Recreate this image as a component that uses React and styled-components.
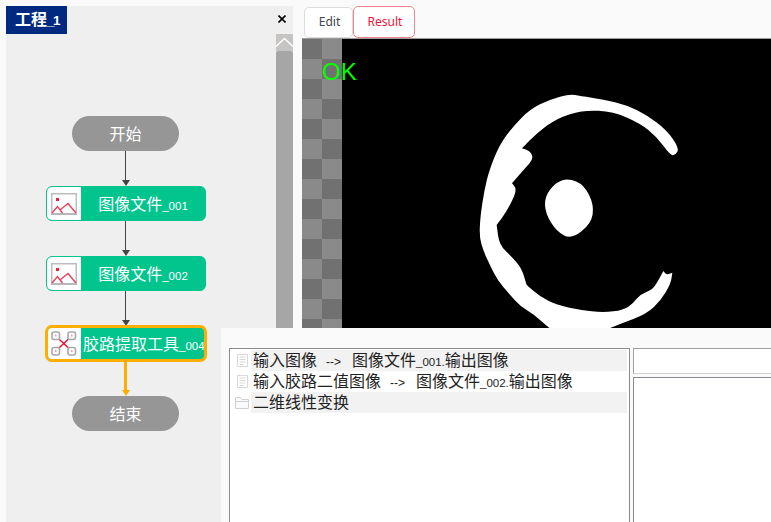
import React from "react";
import styled, { createGlobalStyle } from "styled-components";

const sans = `"Liberation Sans", "Noto Sans CJK SC", sans-serif`;

const Global = createGlobalStyle`
    html, body {
        margin: 0;
        padding: 0;
        overflow: hidden;
        background: #fafafa;
    }
    * { box-sizing: border-box; }
`;

const Page = styled.div`
    position: relative;
    display: flex;
    width: 771px;
    height: 522px;
    overflow: hidden;
    padding: 6px 0 0 6px;
    background: #fafafa;
    font-family: ${sans};
`;

const Project = styled.section`
    display: flex;
    flex-direction: column;
    flex: none;
    width: 287px;
    height: 516px;
    background: #efefef;
`;

const ProjectHead = styled.header`
    display: flex;
    flex: none;
    align-items: center;
    justify-content: space-between;
    height: 28px;
`;

const ProjectTab = styled.div`
    width: 61px;
    height: 28px;
    padding-left: 9px;
    background: #002a7f;
    color: #fff;
    font-size: 16px;
    font-weight: 700;
    line-height: 27px;
`;

const TabSuffix = styled.span`
    font-size: 13.5px;
    letter-spacing: -1.5px;
`;

const Close = styled.button`
    display: flex;
    width: 8px;
    height: 8px;
    margin: 0 7px 2px 0;
    padding: 0;
    border: 0;
    background: none;
`;

const ProjectBody = styled.div`
    display: flex;
    flex: 1;
    min-height: 0;
`;

const Canvas = styled.div`
    display: flex;
    flex-direction: column;
    align-items: center;
    flex: none;
    width: 240px;
    padding-top: 82px;
`;

const Scrollbar = styled.div`
    display: flex;
    flex-direction: column;
    width: 17px;
    margin-left: auto;
`;

const ScrollUp = styled.div`
    display: flex;
    flex: none;
    height: 17px;
    background: #c6c3c3;
`;

const ScrollThumb = styled.div`
    flex: 1;
    border-radius: 2px 2px 0 0;
    background: #a6a6a6;
`;

const Pill = styled.div`
    flex: none;
    width: 107px;
    height: 35px;
    margin-right: 1px;
    border-radius: 18px;
    background: #969696;
    color: #fff;
    font-size: 16px;
    line-height: 37px;
    text-align: center;
`;

const Connector = styled.div`
    display: flex;
    flex-direction: column;
    align-items: center;
    flex: none;
    height: 35px;
    margin-right: 1px;
    &::before {
        content: "";
        flex: 1;
        width: ${(props) => (props.$active ? "3px" : "1px")};
        background: ${(props) => (props.$active ? "#ffae00" : "#444")};
    }
    &::after {
        content: "";
        flex: none;
        border-style: solid;
        border-width: 6px 4px 0;
        border-color: ${(props) => (props.$active ? "#ffae00" : "#444")} transparent transparent;
    }
`;

const Node = styled.div`
    display: flex;
    flex: none;
    width: 160px;
    height: 35px;
    overflow: hidden;
    border: ${(props) => (props.$active ? "2px solid #ffae00" : "1px solid #02c58e")};
    border-radius: 6px;
    box-shadow: ${(props) => (props.$active ? "0 0 0 1px #ffae00" : "none")};
    background: #02c58e;
`;

const NodeIcon = styled.div`
    display: flex;
    align-items: center;
    flex: none;
    width: ${(props) => (props.$active ? "33px" : "34px")};
    padding-left: ${(props) => (props.$active ? "3px" : "4px")};
    background: #fff;
`;

const NodeLabel = styled.div`
    flex: 1;
    min-width: 0;
    padding-left: ${(props) => (props.$active ? "2px" : "0")};
    color: #fff;
    font-size: 16px;
    line-height: ${(props) => (props.$active ? "33px" : "35px")};
    text-align: ${(props) => (props.$active ? "left" : "center")};
    white-space: nowrap;
`;

const Small = styled.span`
    font-size: 11.5px;
`;

const Work = styled.section`
    display: flex;
    flex-direction: column;
    flex: none;
    width: 469px;
    margin: -6px 0 0 9px;
`;

const Tabs = styled.nav`
    display: flex;
    align-items: flex-end;
    flex: none;
    height: 38px;
    padding-left: 2px;
`;

const Tab = styled.button`
    width: ${(props) => (props.$active ? "62px" : "49px")};
    height: ${(props) => (props.$active ? "32px" : "31px")};
    padding: 0 0 2px 2px;
    border: 1px solid ${(props) => (props.$active ? "#f08492" : "#dcdcdc")};
    border-radius: 5px;
    background: #fff;
    color: ${(props) => (props.$active ? "#f0143c" : "#3f4650")};
    font-family: "Noto Sans", sans-serif;
    font-size: 12px;
`;

const Viewer = styled.div`
    position: relative;
    display: flex;
    flex: none;
    height: 484px;
    border-top: 1px solid #9c9c9c;
`;

const Checker = styled.div`
    flex: none;
    width: 40px;
    background-color: #8a8a8a;
    background-image: repeating-conic-gradient(#8a8a8a 0 25%, #717171 0 50%);
    background-size: 40px 40px;
`;

const Picture = styled.div`
    flex: 1;
    padding: 41px 0 0 128px;
    background: #000;
`;

const Verdict = styled.span`
    position: absolute;
    top: 19px;
    left: 20px;
    color: #00ff00;
    font-family: "Liberation Sans", sans-serif;
    font-size: 24px;
    line-height: 28px;
`;

const Props = styled.section`
    position: absolute;
    top: 328px;
    left: 221px;
    display: grid;
    grid-template-columns: 401px 160px;
    column-gap: 3px;
    width: 580px;
    height: 230px;
    padding: 20px 0 0 8px;
    background: #fafafa;
`;

const Tree = styled.div`
    height: 200px;
    padding-top: 1px;
    border: 1px solid #8a8a90;
    background: #fff;
`;

const Row = styled.div`
    display: flex;
    height: 21px;
`;

const RowIcon = styled.div`
    display: flex;
    align-items: center;
    justify-content: center;
    flex: none;
    width: 21px;
    padding-left: 3px;
`;

const RowLabel = styled.div`
    flex: 1;
    margin-right: 2px;
    padding-left: 2px;
    background: ${(props) => (props.$shaded ? "#f2f2f2" : "transparent")};
    color: #222;
    font-size: 16px;
    line-height: 21px;
    white-space: nowrap;
`;

const Arrow = styled.span`
    margin: 0 11px 0 9px;
    font-size: 12px;
`;

const Side = styled.div`
    display: flex;
    flex-direction: column;
    gap: 3px;
`;

const Field = styled.div`
    flex: none;
    height: 26px;
    border: 1px solid #a0a0a0;
    border-bottom-color: #d0d0d0;
    background: #fff;
`;

const SideBox = styled.div`
    flex: 1;
    border: 1px solid #8a8a90;
    background: #fff;
`;

const ImageIcon = () => (
    <svg width="26" height="22" viewBox="0 0 26 22" fill="none">
        <path d="M0.75 20.5V0.75H25.25V20.5" stroke="#bdbdbd" strokeWidth="1.5" />
        <rect x="0" y="20" width="26" height="2" fill="#b8b8b8" />
        <rect x="5" y="5" width="3" height="3" fill="#f0203c" />
        <path d="M1 20 6.5 13.5 11.5 20M9 17 17 10.5 25 20" stroke="#e8405a" strokeWidth="1.4" />
    </svg>
);

const ToolIcon = () => (
    <svg width="26" height="25" viewBox="0 0 26 25" fill="none">
        <g stroke="#a8a8a8" strokeWidth="1.6" fill="#fff">
            <rect x="1" y="1" width="7.5" height="7.5" rx="2" />
            <rect x="17" y="1" width="7.5" height="7.5" rx="2" />
            <rect x="1" y="16.5" width="7.5" height="7.5" rx="2" />
            <rect x="17" y="16.5" width="7.5" height="7.5" rx="2" />
        </g>
        <g fill="#f29aa6">
            <rect x="4" y="3.5" width="1.5" height="2" />
            <rect x="20" y="3.5" width="1.5" height="2" />
            <rect x="4" y="19" width="1.5" height="2" />
            <rect x="20" y="19" width="1.5" height="2" />
        </g>
        <path d="M8.5 8.5 17 16.5M17 8.5 8.5 16.5" stroke="#e8142e" strokeWidth="1.5" />
    </svg>
);

const DocIcon = () => (
    <svg width="11" height="13" viewBox="0 0 11 13" fill="none" stroke="#d8d8d8">
        <path d="M0.5 0.5h10v12h-10zM2.5 3h6M2.5 5.5h6M2.5 8h6M2.5 10.5h4" />
    </svg>
);

const FolderIcon = () => (
    <svg width="14" height="12" viewBox="0 0 14 12" fill="#fafafa" stroke="#cfcfcf">
        <path d="M0.5 11.5v-11h5l1.5 2h6.5v9zM0.5 4.5h13" />
    </svg>
);

// outline traced from the camera result; a repeated point keeps its corner sharp
const ring = [
    [628, 205], [590, 150], [530, 105], [470, 75], [400, 58], [330, 48], [300, 42],
    [240, 58], [180, 88], [130, 138], [88, 195], [58, 270], [43, 330], [31, 410], [28, 470],
    [40, 512], [58, 552], [83, 602], [118, 642], [150, 678], [190, 702], [230, 738], [260, 760],
    [380, 760], [450, 732], [530, 702], [572, 662], [602, 612], [607, 578], [607, 578], [590, 585], [580, 573], [580, 573],
    [560, 610], [545, 630], [510, 643], [490, 670], [460, 690], [400, 698], [330, 690], [260, 675],
    [210, 650], [170, 615], [170, 615], [155, 565], [125, 530], [88, 495], [80, 435], [80, 435], [110, 395], [142, 330],
    [126, 310], [126, 310], [165, 265], [190, 238], [182, 214], [156, 205], [156, 205], [200, 160], [260, 115], [340, 90],
    [430, 95], [510, 130], [560, 170], [600, 225], [616, 226],
];

const blob = [
    [295, 295], [342, 314], [372, 375], [364, 430], [305, 478], [260, 455], [226, 400], [224, 350], [256, 308],
];

const smooth = (points) => {
    const mid = (a, b) => [(a[0] + b[0]) / 2, (a[1] + b[1]) / 2];
    const start = mid(points[points.length - 1], points[0]);
    const curves = points.map((point, i) => {
        const end = mid(point, points[(i + 1) % points.length]);
        return `Q${point[0]} ${point[1]} ${end[0]} ${end[1]}`;
    });
    return `M${start[0]} ${start[1]}${curves.join("")}Z`;
};

const Binary = () => (
    <svg width="230" height="250" viewBox="0 0 690 750">
        <path fill="#fff" d={smooth(ring)} />
        <path fill="#fff" d={smooth(blob)} />
    </svg>
);

export default function App() {
    return (
        <Page>
            <Global />
            <Project>
                <ProjectHead>
                    <ProjectTab>工程<TabSuffix>_1</TabSuffix></ProjectTab>
                    <Close aria-label="close">
                        <svg width="8" height="8" viewBox="0 0 8 8">
                            <path d="M0.5 0.5 7.5 7.5M7.5 0.5 0.5 7.5" stroke="#000" strokeWidth="1.6" />
                        </svg>
                    </Close>
                </ProjectHead>
                <ProjectBody>
                    <Canvas>
                        <Pill>开始</Pill>
                        <Connector />
                        <Node>
                            <NodeIcon><ImageIcon /></NodeIcon>
                            <NodeLabel>图像文件<Small>_001</Small></NodeLabel>
                        </Node>
                        <Connector />
                        <Node>
                            <NodeIcon><ImageIcon /></NodeIcon>
                            <NodeLabel>图像文件<Small>_002</Small></NodeLabel>
                        </Node>
                        <Connector />
                        <Node $active>
                            <NodeIcon $active><ToolIcon /></NodeIcon>
                            <NodeLabel $active>胶路提取工具<Small>_004</Small></NodeLabel>
                        </Node>
                        <Connector $active />
                        <Pill>结束</Pill>
                    </Canvas>
                    <Scrollbar>
                        <ScrollUp>
                            <svg width="17" height="17" viewBox="0 0 17 17" fill="none">
                                <path d="M0 12.5 8.5 4.5 17 12.5" stroke="#fff" strokeWidth="1.4" />
                            </svg>
                        </ScrollUp>
                        <ScrollThumb />
                    </Scrollbar>
                </ProjectBody>
            </Project>
            <Work>
                <Tabs>
                    <Tab>Edit</Tab>
                    <Tab $active>Result</Tab>
                </Tabs>
                <Viewer>
                    <Checker />
                    <Picture><Binary /></Picture>
                    <Verdict>OK</Verdict>
                </Viewer>
            </Work>
            <Props>
                <Tree>
                    <Row>
                        <RowIcon><DocIcon /></RowIcon>
                        <RowLabel $shaded>输入图像<Arrow>--&gt;</Arrow>图像文件<Small>_001.</Small>输出图像</RowLabel>
                    </Row>
                    <Row>
                        <RowIcon><DocIcon /></RowIcon>
                        <RowLabel>输入胶路二值图像<Arrow>--&gt;</Arrow>图像文件<Small>_002.</Small>输出图像</RowLabel>
                    </Row>
                    <Row>
                        <RowIcon><FolderIcon /></RowIcon>
                        <RowLabel $shaded>二维线性变换</RowLabel>
                    </Row>
                </Tree>
                <Side>
                    <Field />
                    <SideBox />
                </Side>
            </Props>
        </Page>
    );
}
